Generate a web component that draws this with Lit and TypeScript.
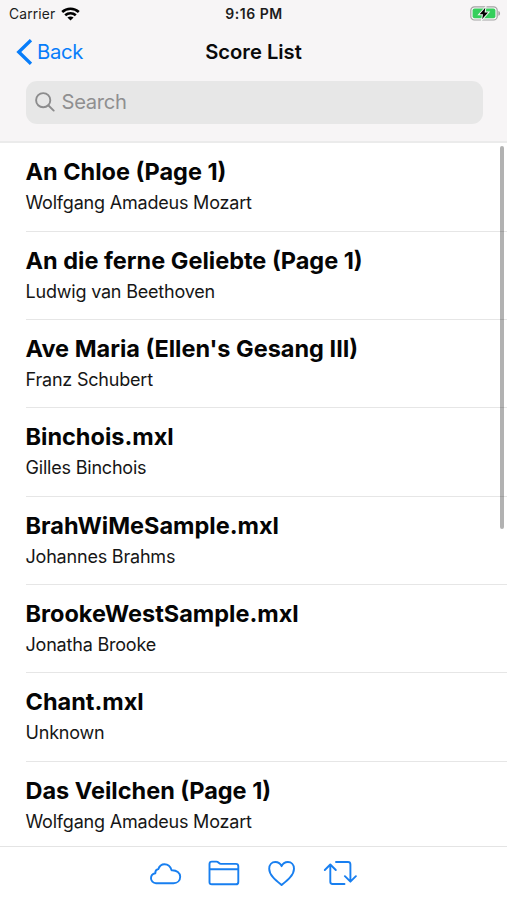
import { LitElement, html, css } from "lit";
import { customElement, property } from "lit/decorators.js";

interface Score {
  title: string;
  composer: string;
}

const SCORES: Score[] = [
  { title: "An Chloe (Page 1)", composer: "Wolfgang Amadeus Mozart" },
  { title: "An die ferne Geliebte (Page 1)", composer: "Ludwig van Beethoven" },
  { title: "Ave Maria (Ellen's Gesang III)", composer: "Franz Schubert" },
  { title: "Binchois.mxl", composer: "Gilles Binchois" },
  { title: "BrahWiMeSample.mxl", composer: "Johannes Brahms" },
  { title: "BrookeWestSample.mxl", composer: "Jonatha Brooke" },
  { title: "Chant.mxl", composer: "Unknown" },
  { title: "Das Veilchen (Page 1)", composer: "Wolfgang Amadeus Mozart" },
];

@customElement("status-bar")
class StatusBar extends LitElement {
  static styles = css`
    :host {
      display: grid;
      grid-template-columns: 1fr auto 1fr;
      align-items: center;
      height: 27px;
      padding: 0 6px 0 9px;
      font-size: 13.8px;
      color: #1c1c1c;
    }
    .carrier {
      display: flex;
      align-items: center;
      gap: 6px;
      letter-spacing: 0.15px;
    }
    .time {
      font-weight: 600;
      font-size: 14px;
      letter-spacing: 0.55px;
      margin-right: 2px;
    }
    .battery {
      justify-self: end;
    }
    svg {
      display: block;
    }
  `;
  render() {
    return html`
      <div class="carrier">
        <span>Carrier</span>
        <svg width="19" height="14" viewBox="0 0 19 14" fill="none" stroke="#000" stroke-width="2.6">
          <path d="M1.2 5C5.8.6 13.200.6 17.800 5" />
          <path d="M4.200 8.300C7.200 5.500 11.800 5.500 14.800 8.300" />
          <path d="M9.500 13.600L6.400 10.600C8.200 9 10.800 9 12.600 10.600Z" fill="#000" stroke="none" />
        </svg>
      </div>
      <span class="time">9:16 PM</span>
      <svg class="battery" width="31" height="15" viewBox="0 0 31 15">
        <rect x=".8" y=".8" width="26.400" height="13.200" rx="3.600" fill="#f8f7f8" stroke="#a3a3a3" stroke-width="1.200" />
        <rect x="2.600" y="2.600" width="22.800" height="9.600" rx="2" fill="#35cf5c" />
        <path d="M28.400 5C30.600 5.600 30.600 9.200 28.400 9.800Z" fill="#a3a3a3" />
        <path d="M15.300 1.800L9.600 8.200H13L12.200 13L18 6.500H14.600Z" fill="#000" stroke="#f1faf3" stroke-width="2" paint-order="stroke" />
      </svg>
    `;
  }
}

@customElement("nav-header")
class NavHeader extends LitElement {
  static styles = css`
    :host {
      display: block;
    }
    .bar {
      display: grid;
      grid-template-columns: 1fr auto 1fr;
      align-items: center;
      height: 49px;
      padding: 0 16px;
    }
    .back {
      display: flex;
      align-items: center;
      gap: 5px;
      color: #087dfa;
      font-size: 20.3px;
      letter-spacing: -0.35px;
    }
    .title {
      font-size: 20.2px;
      font-weight: 600;
      color: #0a0a0a;
    }
    .search {
      display: flex;
      align-items: center;
      gap: 7px;
      box-sizing: border-box;
      height: 43px;
      margin: 5px 24.500px 0 25.500px;
      padding: 0 0 2px 9px;
      border-radius: 11px;
      background: #e7e7e7;
      color: #8f8f90;
      font-size: 20.2px;
      letter-spacing: -0.3px;
    }
    svg {
      display: block;
    }
  `;
  render() {
    return html`
      <div class="bar">
        <div class="back">
          <svg width="16" height="26" viewBox="0 0 16 26" fill="none" stroke="#087dfa" stroke-width="3.400" stroke-linecap="butt">
            <path d="M15 1.200L2.800 13L15 24.800" />
          </svg>
          <span>Back</span>
        </div>
        <span class="title">Score List</span>
      </div>
      <div class="search">
        <svg width="20" height="20" viewBox="0 0 20 20" fill="none" stroke="#8c8c8d" stroke-width="1.900" stroke-linecap="round">
          <circle cx="8.200" cy="8.200" r="7.100" />
          <path d="M13.500 13.500L18.700 18.600" />
        </svg>
        <span>Search</span>
      </div>
    `;
  }
}

@customElement("score-row")
class ScoreRow extends LitElement {
  @property() heading = "";
  @property() composer = "";
  static styles = css`
    :host {
      display: block;
      box-sizing: border-box;
      height: 88.370px;
      margin-left: 25.500px;
      padding-top: 14px;
      border-bottom: 1px solid #e6e6e6;
      white-space: nowrap;
    }
    .heading {
      font-size: 23.500px;
      line-height: 30px;
      font-weight: 700;
      color: #050505;
    }
    .composer {
      margin-top: 4px;
      font-size: 18px;
      line-height: 24px;
      letter-spacing: -0.2px;
      color: #161616;
    }
  `;
  render() {
    return html`
      <div class="heading">${this.heading}</div>
      <div class="composer">${this.composer}</div>
    `;
  }
}

@customElement("tool-bar")
class ToolBar extends LitElement {
  static styles = css`
    :host {
      display: flex;
      justify-content: center;
      box-sizing: border-box;
      height: 54px;
      padding: 11px 1.500px 0 0;
      gap: 24px;
      border-top: 1px solid #e4e4e4;
      background: #fff;
    }
    svg {
      display: block;
      fill: none;
      stroke: #187ff0;
      stroke-width: 1.900;
      stroke-linecap: round;
      stroke-linejoin: round;
    }
  `;
  render() {
    return html`
      <svg width="34" height="30" viewBox="0 0 34 30">
        <path d="M7 25.200C4 25.200 2 22.800 2 20.200C2 17.500 4 15.600 6.300 15.200C6.200 12.800 7.400 11.400 9.300 11.100C10.400 8 12.700 6.200 15.500 6.200C19 6.200 21.500 8.500 22.600 12.200C27.800 12 31.200 14.800 31.200 18.700C31.200 22.600 28.300 25.200 24.500 25.200Z" />
      </svg>
      <svg width="34" height="30" viewBox="0 0 34 30">
        <path d="M2.500 24.200V6Q2.500 3.600 4.900 3.600H9.500C11.600 3.600 11.800 5.900 14 5.900H28.900Q31.300 5.900 31.300 8.300V23.900Q31.300 26.300 28.900 26.300H4.900Q2.500 26.300 2.500 24.200ZM2.500 11.200H31.300" />
      </svg>
      <svg width="34" height="30" viewBox="0 0 34 30">
        <path d="M16.600 27C11 22.400 4.200 17.200 4.200 10.700C4.200 6.800 6.800 4 10.300 4C13.200 4 15.500 5.600 16.600 8.200C17.700 5.600 20 4 22.900 4C26.400 4 29 6.800 29 10.700C29 17.200 22.200 22.400 16.600 27Z" />
      </svg>
      <svg width="34" height="30" viewBox="0 0 34 30">
        <path d="M1.800 12L7.300 6.500L12.800 12M7.300 7V23.800Q7.300 26 9.500 26H21.500" />
        <path d="M13 4H25Q27.400 4 27.400 6.400V23.200M21.900 18.200L27.400 23.700L32.900 18.200" />
      </svg>
    `;
  }
}

@customElement("app-root")
class AppRoot extends LitElement {
  static styles = css`
    :host {
      position: relative;
      display: flex;
      flex-direction: column;
      width: 507px;
      height: 900px;
      overflow: hidden;
      background: #fff;
      font-family: Inter, "Liberation Sans", sans-serif;
    }
    .top {
      flex: none;
      box-sizing: border-box;
      height: 143.300px;
      background: #f7f5f6;
      border-bottom: 2px solid #ebebeb;
    }
    .list {
      flex: 1;
      min-height: 0;
      overflow: hidden;
    }
    .scrollbar {
      position: absolute;
      top: 146px;
      right: 3px;
      width: 4px;
      height: 383px;
      border-radius: 2px;
      background: rgba(0, 0, 0, 0.3);
    }
    tool-bar {
      flex: none;
    }
  `;
  render() {
    return html`
      <div class="top">
        <status-bar></status-bar>
        <nav-header></nav-header>
      </div>
      <div class="list">
        ${SCORES.map((s) => html`<score-row .heading=${s.title} .composer=${s.composer}></score-row>`)}
      </div>
      <tool-bar></tool-bar>
      <div class="scrollbar"></div>
    `;
  }
}
